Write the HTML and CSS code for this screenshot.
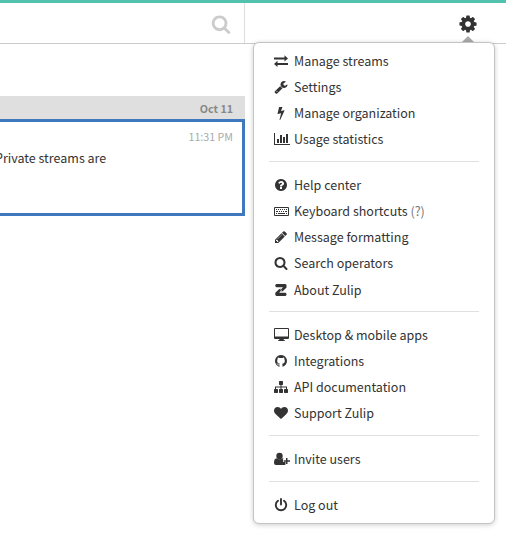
FILE: index.html
```
<!DOCTYPE html>
<html lang="en">
<head>
<meta charset="utf-8">
<title>Zulip</title>
<link rel="stylesheet" href="styles.css">
</head>
<body>
<header class="navbar">
  <div class="search"><svg class="search-icon" viewBox="0 0 1792 1792"><path d="M1216 832q0-185-131.500-316.500t-316.500-131.500-316.500 131.500-131.500 316.500 131.500 316.500 316.500 131.500 316.500-131.500 131.500-316.500zm512 832q0 52-38 90t-90 38q-54 0-90-38l-343-342q-179 124-399 124-143 0-273.500-55.500t-225-150-150-225-55.500-273.500 55.500-273.500 150-225 225-150 273.500-55.500 273.500 55.500 225 150 150 225 55.500 273.500q0 220-124 399l343 343q37 37 37 90z"/></svg></div>
  <div class="gear">
    <svg class="gear-icon" viewBox="0 0 1792 1792"><path d="M1152 896q0-106-75-181t-181-75-181 75-75 181 75 181 181 75 181-75 75-181zm512-109v222q0 12-8 23t-20 13l-185 28q-19 54-39 91 35 50 107 138 10 12 10 25t-9 23q-27 37-99 108t-94 71q-12 0-26-9l-138-108q-44 23-91 38-16 136-29 186-7 28-36 28h-222q-14 0-24.500-8.500t-11.500-21.500l-28-184q-49-16-90-37l-141 107q-10 9-25 9-14 0-25-11-126-114-165-168-7-10-7-23 0-12 8-23 15-21 51-66.500t54-70.500q-27-50-41-99l-183-27q-13-2-21-12.500t-8-23.500v-222q0-12 8-23t19-13l186-28q14-46 39-92-40-57-107-138-10-12-10-24 0-10 9-23 26-36 98.500-107.500t94.500-71.500q13 0 26 10l138 107q44-23 91-38 16-136 29-186 7-28 36-28h222q14 0 24.500 8.500t11.500 21.500l28 184q49 16 90 37l142-107q9-9 24-9 13 0 25 10 129 119 165 170 7 8 7 22 0 12-8 23-15 21-51 66.500t-54 70.500q26 50 41 98l183 28q13 2 21 12.500t8 23.500z"/></svg>
  </div>
</header>
<main class="feed">
  <div class="date-row">Oct 11</div>
  <article class="message">
    <time class="time">11:31 PM</time>
    <p class="body">Private streams are</p>
  </article>
</main>
<nav class="menu">
  <ul class="group">
    <li class="item"><svg class="icon" viewBox="1 0 16 14"><path d="M1 3.600h10.500V1.300l3.500 3.200-3.500 3V5.400H1zM15 9.100H4.500V6.800L1 10l3.500 3v-2.100H15z"/></svg><span>Manage streams</span></li>
    <li class="item"><svg class="icon" viewBox="0 0 2048 1792"><path d="M448 1472q0-26-19-45t-45-19-45 19-19 45 19 45 45 19 45-19 19-45zm644-420l-682 682q-37 37-90 37-52 0-91-37l-106-108q-38-36-38-90 0-53 38-91l681-681q39 98 114.500 173.500t173.500 114.500zm634-435q0 39-23 106-47 134-164.500 217.500t-258.500 83.500q-185 0-316.500-131.500t-131.500-316.500 131.500-316.500 316.500-131.500q58 0 121.500 16.500t107.500 46.500q16 11 16 28t-16 28l-293 169v224l193 107q5-3 79-48.500t135.500-81 70.500-35.500q15 0 23.500 10t8.500 25z"/></svg><span>Settings</span></li>
    <li class="item"><svg class="icon" viewBox="0 0 2048 1792"><path d="M1333 566q18 20 7 44l-540 1157q-13 25-42 25-4 0-14-2-17-5-25.500-19t-4.500-30l197-808-406 101q-4 1-12 1-18 0-31-11-18-15-13-39l201-825q4-14 16-23t28-9h328q19 0 32 12.500t13 29.500q0 8-5 18l-171 463 396-98q8-2 12-2 19 0 34 15z"/></svg><span>Manage organization</span></li>
    <li class="item"><svg class="icon" viewBox="0 0 16 14"><path d="M0 1h1v11h15v1H0zM3 7h2v4H3zM6 3h2v8H6zM9 5h2v6H9zM12 2h2v9h-2z"/></svg><span>Usage statistics</span></li>
  </ul>
  <ul class="group">
    <li class="item"><svg class="icon" viewBox="0 0 2048 1792"><path d="M1024 1376v-192q0-14-9-23t-23-9h-192q-14 0-23 9t-9 23v192q0 14 9 23t23 9h192q14 0 23-9t9-23zm256-672q0-88-55.500-163t-138.500-116-170-41q-243 0-371 213-15 24 8 42l132 100q7 6 19 6 16 0 25-12 53-68 86-92 34-24 86-24 48 0 85.500 26t37.500 59q0 38-20 61t-68 45q-63 28-115.500 86.500t-52.500 125.500v36q0 14 9 23t23 9h192q14 0 23-9t9-23q0-19 21.500-49.500t54.500-49.500q32-18 49-28.500t46-35 44.500-48 28-60.500 12.500-81zm384 192q0 209-103 385.500t-279.500 279.500-385.500 103-385.500-103-279.500-279.500-103-385.500 103-385.500 279.500-279.500 385.500-103 385.500 103 279.500 279.500 103 385.500z"/></svg><span>Help center</span></li>
    <li class="item"><svg class="icon" viewBox="0 0 16 14"><path fill-rule="evenodd" d="M1 3h13q1 0 1 1v7q0 1-1 1H1q-1 0-1-1V4q0-1 1-1zm0 1v7h13V4z"/><path d="M2 5h1v1H2zM4 5h1v1H4zM6 5h1v1H6zM8 5h1v1H8zM10 5h1v1h-1zM12 5h1v1h-1zM2 7h2v1H2zM5 7h1v1H5zM7 7h1v1H7zM9 7h1v1H9zM11 7h2v1h-2zM2 9h1v1H2zM4 9h7v1H4zM12 9h1v1h-1z"/></svg><span>Keyboard shortcuts <span class="hint">(?)</span></span></li>
    <li class="item"><svg class="icon" viewBox="0 0 2048 1792"><path d="M491 1536l91-91-235-235-91 91v107h128v128h107zm523-928q0-22-22-22-10 0-17 7l-542 542q-7 7-7 17 0 22 22 22 10 0 17-7l542-542q7-7 7-17zm-54-192l416 416-832 832h-416v-416zm683 96q0 53-37 90l-166 166-416-416 166-165q36-38 90-38 53 0 91 38l235 234q37 39 37 91z"/></svg><span>Message formatting</span></li>
    <li class="item"><svg class="icon" viewBox="0 0 2048 1792"><path d="M1216 832q0-185-131.500-316.500t-316.500-131.500-316.500 131.500-131.500 316.500 131.500 316.500 316.500 131.500 316.500-131.500 131.500-316.500zm512 832q0 52-38 90t-90 38q-54 0-90-38l-343-342q-179 124-399 124-143 0-273.500-55.500t-225-150-150-225-55.500-273.500 55.500-273.500 150-225 225-150 273.500-55.500 273.500 55.500 225 150 150 225 55.500 273.500q0 220-124 399l343 343q37 37 37 90z"/></svg><span>Search operators</span></li>
    <li class="item low"><svg class="icon" viewBox="0 0 16 14"><path d="M2.300 1H11.500l1 1v2.500L9 8l-1.600.7.600-2.200-2.800 3.300h6.300l1 1V12l-1 1H2.300l-1-1V9.700L5 6.200l1.700-.8-.6 2.200L9 4.200H2.300l-1-1V2z"/></svg><span>About Zulip</span></li>
  </ul>
  <ul class="group">
    <li class="item"><svg class="icon" viewBox="0 0 16 14"><path fill-rule="evenodd" d="M1 0h13q1 0 1 1v9q0 1-1 1H9.500l.5 1.200h1V13H4v-.8h1L5.500 11H1q-1 0-1-1V1q0-1 1-1zm0 1v7.500h13V1z"/></svg><span>Desktop &amp; mobile apps</span></li>
    <li class="item"><svg class="icon" viewBox="0 0 2048 1792"><path d="M896 128q209 0 385.500 103t279.500 279.500 103 385.500q0 251-146.500 451.500t-378.500 277.500q-27 5-40-7t-13-30q0-3 .5-76.500t.5-134.500q0-97-52-142 57-6 102.500-18t94-39 81-66.500 53-105 20.500-150.500q0-119-79-206 37-91-8-204-28-9-81 11t-92 44l-38 24q-93-26-192-26t-192 26q-16-11-42.500-27t-83.500-38.500-85-13.500q-45 113-8 204-79 87-79 206 0 85 20.500 150t52.500 105 80.500 67 94 39 102.500 18q-39 36-49 103-21 10-45 15t-57 5-65.500-21.500-55.500-62.500q-19-32-48.500-52t-49.500-24l-20-3q-21 0-29 4.500t-5 11.500 9 14 13 12l7 5q22 10 43.500 38t31.500 51l10 23q13 38 44 61.500t67 30 69.500 7 55.500-3.500l23-4q0 38 .5 88.500t.5 54.500q0 18-13 30t-40 7q-232-77-378.500-277.500t-146.500-451.500q0-209 103-385.500t279.500-279.500 385.500-103z"/></svg><span>Integrations</span></li>
    <li class="item"><svg class="icon" viewBox="0 0 16 14"><path d="M5.500 1h3l.5.500v3l-.5.500h-1v1.500H13V9h.5l.5.500v3l-.5.500h-3l-.5-.5v-3l.5-.5H12V7.500H7.500V9h1l.5.500v3l-.5.500h-3l-.5-.5v-3l.5-.5h1V7.500H2V9h1.500l.5.500v3l-.5.500h-3l-.5-.5v-3L.5 9H1V6.500h5.500V5h-1L5 4.500v-3z"/></svg><span>API documentation</span></li>
    <li class="item"><svg class="icon" viewBox="0 0 2048 1792"><path d="M896 1664q-26 0-44-18l-624-602q-10-8-27.500-26t-55.500-65.500-68-97.500-53.500-121-23.500-138q0-220 127-344t351-124q62 0 126.500 21.500t120 58 95.500 68.500 76 68q36-36 76-68t95.500-68.500 120-58 126.500-21.500q224 0 351 124t127 344q0 221-229 450l-623 600q-18 18-44 18z"/></svg><span>Support Zulip</span></li>
  </ul>
  <ul class="group">
    <li class="item"><svg class="icon" viewBox="0 0 16 14"><circle cx="5.500" cy="4" r="3.200"/><path d="M2.500 6.200q3 2.200 6 0 .8.200 1.200.8H9v3h2.500v2.500q-.5.500-1.500.5H2q-2 0-2-2 0-4.500 2.500-4.800zM12 6h1.500v2.300H16v1.500h-2.500V12H12V9.800H9.700V8.300H12z"/></svg><span>Invite users</span></li>
  </ul>
  <ul class="group">
    <li class="item"><svg class="icon" viewBox="0 0 16 14"><path class="stroke" d="M4 2.800a5.200 5.200 0 1 0 6 0M7 1v5.500"/></svg><span>Log out</span></li>
  </ul>
</nav>
</body>
</html>
```
FILE: styles.css
```
* { box-sizing: border-box; }

body {
  margin: 0;
  height: 540px;
  overflow: hidden;
  background: #fff;
  color: #333;
  font-family: "Noto Sans CJK SC", sans-serif;
  font-size: 12.5px;
}

svg { display: block; fill: #333; }

.navbar {
  display: flex;
  height: 44px;
  border-top: 3px solid #52c2af;
  border-bottom: 1px solid #ccc;
}

.search {
  width: 245px;
  padding: 11px 13px 0 0;
  border-right: 1px solid #ddd;
}

.search-icon { width: 20px; height: 20px; margin-left: auto; fill: #ccc; }

.gear { position: relative; flex: 1; padding: 11px 0 0 213px; }
.gear-icon { width: 20px; height: 20px; }

.gear::after {
  content: "";
  position: absolute;
  left: 216px;
  bottom: 0;
  border: 7px solid transparent;
  border-top: 0;
  border-bottom-color: #aaa;
}

.feed { width: 245px; padding-top: 52px; }

.date-row {
  height: 23px;
  padding-right: 12px;
  background: #dfdfdf;
  color: #888;
  font-size: 10.7px;
  font-weight: 700;
  line-height: 25px;
  text-align: right;
}

.message {
  height: 97px;
  padding: 6px 9px 0 0;
  border: 3px solid #4078c0;
  border-left: 0;
}

.time {
  display: block;
  color: #aaa;
  font-size: 10.7px;
  line-height: 18px;
  text-align: right;
}

.body { margin: 1px 0 0 -5px; line-height: 22px; white-space: nowrap; }

.menu {
  position: absolute;
  left: 253px;
  top: 42px;
  width: 242px;
  height: 482px;
  padding: 5px 15px;
  background: #fff;
  border: 1px solid #c4c4c4;
  border-radius: 6px;
  box-shadow: 0 1px 5px rgba(0, 0, 0, .2);
}

.group { margin: 0; padding: 0; list-style: none; }
.group + .group { margin-top: 9px; padding-top: 10px; border-top: 1px solid #e0e0e0; }

.item {
  display: flex;
  align-items: center;
  gap: 4px;
  height: 26px;
  padding-left: 5px;
  line-height: 26px;
  white-space: nowrap;
}

.low { padding-top: 2px; }
.icon { flex: none; width: 16px; height: 14px; }
.stroke { fill: none; stroke: #333; stroke-width: 1.9; stroke-linecap: round; }
.hint { color: #777; }
```
